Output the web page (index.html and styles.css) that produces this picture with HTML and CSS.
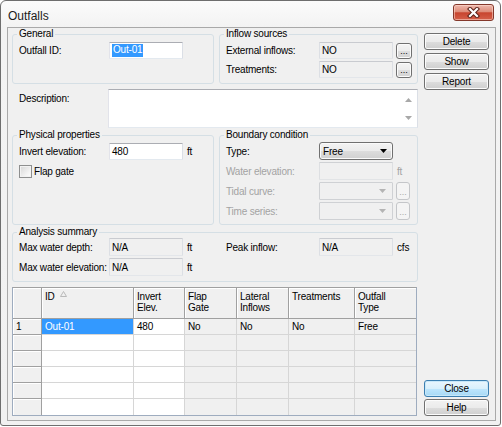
FILE: index.html
```html
<!DOCTYPE html>
<html>
<head>
<meta charset="utf-8">
<title>Outfalls</title>
<link rel="stylesheet" href="styles.css">
</head>
<body>
<div class="window">
  <div class="titlebar">
    <span class="title">Outfalls</span>
    <span class="closebtn">
      <svg width="13" height="11" viewBox="0 0 13 11"><path d="M3 2 L10 9 M10 2 L3 9" stroke="#5b2118" stroke-width="4.2" stroke-linecap="square" fill="none"/><path d="M3 2 L10 9 M10 2 L3 9" stroke="#ffffff" stroke-width="2.2" stroke-linecap="square" fill="none"/></svg>
    </span>
  </div>
  <div class="client">
    <div class="main">
      <div class="row2">
        <fieldset class="group g-left top-group">
          <legend>General</legend>
          <div class="frows">
            <div class="frow h17"><span class="lbl">Outfall ID:</span><span class="edit h17"><span class="seltext">Out-01</span></span></div>
          </div>
        </fieldset>
        <fieldset class="group g-right top-group">
          <legend>Inflow sources</legend>
          <div class="frows">
            <div class="frow h17"><span class="lbl w93">External inflows:</span><span class="edit ro h17">NO</span><span class="dots">...</span></div>
            <div class="frow h17"><span class="lbl w93">Treatments:</span><span class="edit ro h17">NO</span><span class="dots">...</span></div>
          </div>
        </fieldset>
      </div>

      <div class="desc-row">
        <span class="desc-lbl">Description:</span>
        <div class="memo">
          <div class="memo-scroll">
            <svg width="7" height="4" viewBox="0 0 7 4"><path d="M0 4 L3.5 0 L7 4 Z" fill="#a8a8a8"/></svg>
            <svg width="7" height="4" viewBox="0 0 7 4"><path d="M0 0 L7 0 L3.5 4 Z" fill="#a8a8a8"/></svg>
          </div>
        </div>
      </div>

      <div class="row2 row-mid">
        <fieldset class="group g-left mid-group">
          <legend>Physical properties</legend>
          <div class="frows g18">
            <div class="frow h18"><span class="lbl">Invert elevation:</span><span class="edit h17">480</span><span class="unit">ft</span></div>
            <div class="frow h18"><span class="chk"></span><span class="chk-lbl">Flap gate</span></div>
          </div>
        </fieldset>
        <fieldset class="group g-right mid-group">
          <legend>Boundary condition</legend>
          <div class="frows g18">
            <div class="frow h18"><span class="lbl w93">Type:</span><span class="combo"><span>Free</span><svg width="7" height="4" viewBox="0 0 7 4"><path d="M0 0 L7 0 L3.5 4 Z" fill="#000"/></svg></span></div>
            <div class="frow h18"><span class="lbl w93 dis">Water elevation:</span><span class="edit dis h18"></span><span class="unit dis">ft</span></div>
            <div class="frow h18"><span class="lbl w93 dis">Tidal curve:</span><span class="combo dis"><span></span><svg width="7" height="4" viewBox="0 0 7 4"><path d="M0 0 L7 0 L3.5 4 Z" fill="#b4b4b4"/></svg></span><span class="dots sm dis">...</span></div>
            <div class="frow h18"><span class="lbl w93 dis">Time series:</span><span class="combo dis"><span></span><svg width="7" height="4" viewBox="0 0 7 4"><path d="M0 0 L7 0 L3.5 4 Z" fill="#b4b4b4"/></svg></span><span class="dots sm dis">...</span></div>
          </div>
        </fieldset>
      </div>

      <fieldset class="group analysis">
        <legend>Analysis summary</legend>
        <div class="agrid">
          <span class="lbl">Max water depth:</span><span class="edit ro h18">N/A</span><span class="unit">ft</span>
          <span class="lbl">Peak inflow:</span><span class="edit ro h18">N/A</span><span class="unit">cfs</span>
          <span class="lbl">Max water elevation:</span><span class="edit ro h18">N/A</span><span class="unit">ft</span>
          <span></span><span></span><span></span>
        </div>
      </fieldset>

      <div class="grid">
        <table class="tbl">
          <colgroup>
            <col class="c-rh"><col class="c-id"><col class="c-inv"><col class="c-flap"><col class="c-lat"><col class="c-trt"><col class="c-type">
          </colgroup>
          <thead>
            <tr>
              <th class="rh"></th>
              <th>ID<svg class="sort" width="7" height="6" viewBox="0 0 7 6"><path d="M0.5 5.5 L3.5 0.5 L6.5 5.5 Z" fill="none" stroke="#b9b9b9" stroke-width="1"/></svg></th>
              <th>Invert<br>Elev.</th>
              <th>Flap<br>Gate</th>
              <th>Lateral<br>Inflows</th>
              <th>Treatments</th>
              <th class="last">Outfall<br>Type</th>
            </tr>
          </thead>
          <tbody>
            <tr><td class="rh">1</td><td class="w sel">Out-01</td><td class="w">480</td><td>No</td><td>No</td><td>No</td><td class="last">Free</td></tr>
            <tr><td class="rh"></td><td class="w"></td><td class="w"></td><td></td><td></td><td></td><td class="last"></td></tr>
            <tr><td class="rh"></td><td class="w"></td><td class="w"></td><td></td><td></td><td></td><td class="last"></td></tr>
            <tr><td class="rh"></td><td class="w"></td><td class="w"></td><td></td><td></td><td></td><td class="last"></td></tr>
            <tr><td class="rh"></td><td class="w"></td><td class="w"></td><td></td><td></td><td></td><td class="last"></td></tr>
            <tr class="lastrow"><td class="rh"></td><td class="w"></td><td class="w"></td><td></td><td></td><td></td><td class="last"></td></tr>
          </tbody>
        </table>
      </div>
    </div>

    <div class="side">
      <div class="btngroup">
        <span class="btn">Delete</span>
        <span class="btn">Show</span>
        <span class="btn">Report</span>
      </div>
      <div class="btngroup bottom">
        <span class="btn default">Close</span>
        <span class="btn">Help</span>
      </div>
    </div>
  </div>
</div>
</body>
</html>
```

FILE: styles.css
```css
* { box-sizing: border-box; }
html, body { margin: 0; padding: 0; }
body {
  width: 502px;
  height: 427px;
  overflow: hidden;
  background: #ffffff;
  font-family: "Liberation Sans", Arial, sans-serif;
  font-size: 10px;
  letter-spacing: -0.2px;
  color: #000;
}

.window {
  width: 501px;
  height: 426px;
  border: 1px solid #6e6e6e;
  border-radius: 6px 6px 3px 3px;
  background: linear-gradient(#fbfbfb, #f3f3f3 26px, #f1f1f1);
  display: flex;
  flex-direction: column;
}

.titlebar {
  height: 26px;
  flex: none;
  display: flex;
  justify-content: space-between;
  align-items: flex-start;
}
.title {
  margin: 8px 0 0 7px;
  font-size: 12px;
  line-height: 14px;
  letter-spacing: 0;
  color: #1b1b1b;
}
.closebtn {
  margin: 3px 6px 0 0;
  width: 41px;
  height: 17px;
  border: 1px solid #84382b;
  border-radius: 3px;
  background: linear-gradient(#efb9ad 0%, #dd8c79 45%, #c8452f 52%, #d4604a 100%);
  box-shadow: inset 0 0 0 1px rgba(255, 220, 210, 0.55);
  display: flex;
  align-items: center;
  justify-content: center;
}

.client {
  flex: 1;
  margin: 0 4px 4px 6px;
  border: 1px solid #a9a9a9;
  background: #f0f0f0;
  display: flex;
  gap: 6px;
  padding: 0 5px 4px 4px;
}

.main {
  width: 406px;
  flex: none;
  display: flex;
  flex-direction: column;
}

.row2 { display: flex; gap: 5px; }
.row-mid { margin-top: 1px; }

.group {
  margin: 0;
  min-width: 0;
  border: 1px solid #d5dfe5;
  border-radius: 3px;
  padding: 2px 6px 5px 6px;
}
.group legend {
  padding: 0 2px;
  margin-left: -2px;
  height: 12px;
  line-height: 12px;
}
.g-left { width: 202px; flex: none; }
.g-right { width: 199px; flex: none; }
.mid-group { padding: 1px 6px 4px 6px; }

.frows { display: flex; flex-direction: column; gap: 2px; }
.frow { display: flex; align-items: center; }
.h17 { height: 17px; }
.h18 { height: 18px; }

.lbl { width: 90px; flex: none; white-space: nowrap; }
.lbl.w93 { width: 93px; }
.dis { color: #a3a3a3; }

.edit {
  width: 74px;
  flex: none;
  border: 1px solid;
  border-color: #abadb3 #dbdfe6 #e3e9ef #e2e3ea;
  border-radius: 1px;
  background: #ffffff;
  padding: 0 2px;
  display: flex;
  align-items: center;
}
.edit.ro { background: #f0f0f0; border-color: #c9cbd0 #dcdfe4 #e3e6ea #dcdfe4; }
.edit.dis { background: #f0f0f0; border-color: #cfd1d4 #dddfe2 #e2e4e6 #dddfe2; }
.seltext { background: #3399ff; color: #fff; padding: 0 1px 1px 1px; line-height: 12px; }

.unit { margin-left: 4px; }

.dots {
  width: 16px;
  height: 16px;
  flex: none;
  margin-left: 3px;
  border: 1px solid #707070;
  border-radius: 3px;
  background: linear-gradient(#f4f4f4, #ececec 50%, #dedede 51%, #d2d2d2);
  box-shadow: inset 0 0 0 1px #fbfbfb;
  font-size: 9px;
  line-height: 9px;
  letter-spacing: 0;
  display: flex;
  justify-content: center;
  align-items: flex-end;
  padding-bottom: 2px;
}
.dots.sm { width: 14px; height: 18px; }
.dots.dis {
  border-color: #c4c6c9;
  background: #f4f4f4;
  box-shadow: none;
  color: #a8a8a8;
}

.combo {
  width: 74px;
  height: 18px;
  flex: none;
  border: 1px solid #707070;
  border-radius: 3px;
  background: linear-gradient(#f3f3f3, #ebebeb 50%, #dddddd 51%, #d0d0d0);
  box-shadow: inset 0 0 0 1px #fafafa;
  display: flex;
  align-items: center;
  justify-content: space-between;
  padding: 0 5px 0 3px;
}
.combo.dis {
  border-color: #cfd1d4;
  border-radius: 1px;
  background: #f0f0f0;
  box-shadow: none;
  padding-right: 6px;
}

.chk {
  width: 13px;
  height: 13px;
  flex: none;
  border: 1px solid #8e8f8f;
  background: linear-gradient(135deg, #d6d6d6, #f4f4f4 70%, #fdfdfd);
  box-shadow: inset 0 0 0 1px #f2f2f2;
}
.chk-lbl { margin-left: 2px; }

.desc-row {
  display: flex;
  margin-top: 5px;
  padding-left: 7px;
}
.desc-lbl { width: 89px; flex: none; padding-top: 4px; }
.memo {
  width: 310px;
  height: 39px;
  border: 1px solid;
  border-color: #abadb3 #dbdfe6 #e3e9ef #e2e3ea;
  background: #ffffff;
  display: flex;
  justify-content: flex-end;
}
.memo-scroll {
  width: 17px;
  display: flex;
  flex-direction: column;
  justify-content: space-between;
  align-items: center;
  padding: 8px 0 7px 0;
}

.analysis {
  margin-top: 1px;
  padding: 0 6px 5px 6px;
}
.agrid {
  display: grid;
  grid-template-columns: 90px 74px 43px 93px 74px auto;
  grid-auto-rows: 18px;
  row-gap: 2px;
  align-items: center;
}
.agrid .unit { align-self: center; }

.grid {
  margin-top: 5px;
  width: 405px;
  border: 1px solid #9eacbf;
  border-top-color: #a0a0a0;
  background: #ffffff;
}
.tbl {
  width: 403px;
  table-layout: fixed;
  border-collapse: separate;
  border-spacing: 0;
}
.c-rh { width: 29px; }
.c-id { width: 92px; }
.c-inv { width: 51px; }
.c-flap { width: 52px; }
.c-lat { width: 52px; }
.c-trt { width: 66px; }
.c-type { width: 61px; }

.tbl th {
  height: 31px;
  padding: 3px 3px 0 3px;
  vertical-align: top;
  text-align: left;
  font-weight: normal;
  line-height: 11px;
  background: #f0f0f0;
  border-right: 1px solid #a0a0a0;
  border-bottom: 1px solid #a0a0a0;
  box-shadow: inset 1px 1px 0 #ffffff;
  white-space: nowrap;
}
.tbl th.last, .tbl td.last { border-right: none; }
.sort { margin-left: 5px; vertical-align: top; margin-top: 0; }

.tbl td {
  height: 16px;
  padding: 0 3px;
  line-height: 14px;
  background: #f0f0f0;
  border-right: 1px solid #d6d6d6;
  border-bottom: 1px solid #d6d6d6;
  white-space: nowrap;
}
.tbl td.w { background: #ffffff; }
.tbl td.rh {
  border-right-color: #a0a0a0;
  border-bottom-color: #a0a0a0;
  box-shadow: inset 1px 1px 0 #ffffff;
}
.tbl td.sel { background: #3399ff; color: #ffffff; }
.tbl .lastrow td { border-bottom: none; }

.side {
  width: 65px;
  flex: none;
  display: flex;
  flex-direction: column;
  justify-content: space-between;
  padding-top: 5px;
}
.btngroup { display: flex; flex-direction: column; gap: 3px; }
.btngroup.bottom { gap: 2px; }
.btn {
  height: 17px;
  border: 1px solid #707070;
  border-radius: 3px;
  background: linear-gradient(#f2f2f2, #ebebeb 50%, #dddddd 51%, #cfcfcf);
  box-shadow: inset 0 0 0 1px #fcfcfc;
  display: flex;
  align-items: center;
  justify-content: center;
  line-height: 12px;
}
.btn.default {
  border-color: #3c7fb1;
  background: linear-gradient(#eaf6fd, #d9f0fc 50%, #bee6fd 51%, #a7d9f5);
  box-shadow: inset 0 0 0 1px #c8e8f9;
}
```
